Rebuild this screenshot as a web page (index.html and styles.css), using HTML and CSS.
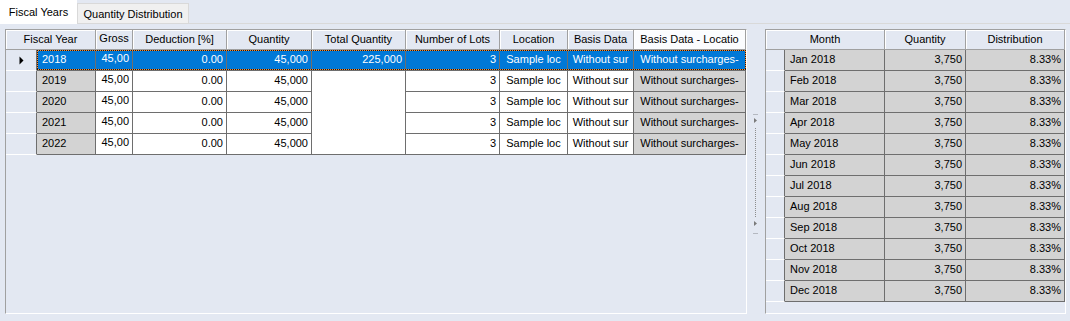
FILE: index.html
```html
<!DOCTYPE html>
<html>
<head>
<meta charset="utf-8">
<title>Fiscal Years</title>
<link rel="stylesheet" href="styles.css">
</head>
<body>
<div class="tabstrip">
  <div class="tab active">Fiscal Years</div>
  <div class="tab">Quantity Distribution</div>
  <div class="tab-fill"></div>
</div>
<div class="page">
  <div class="grid lgrid">
    <div class="table ltable">
      <div class="hd span2">Fiscal Year</div>
      <div class="hd up">Gross</div>
      <div class="hd">Deduction [%]</div>
      <div class="hd">Quantity</div>
      <div class="hd">Total Quantity</div>
      <div class="hd">Number of Lots</div>
      <div class="hd">Location</div>
      <div class="hd">Basis Data</div>
      <div class="hd hot">Basis Data - Locatio</div>

      <div class="rh cur"><svg width="5" height="9" viewBox="0 0 5 9"><polygon points="0.5,0.5 4.5,4.5 0.5,8.5" fill="#000"/></svg></div>
      <div class="c l sel">2018</div>
      <div class="c r sel up">45,00</div>
      <div class="c r sel">0.00</div>
      <div class="c r sel">45,000</div>
      <div class="c r sel">225,000</div>
      <div class="c r sel">3</div>
      <div class="c m sel">Sample loc</div>
      <div class="c m sel">Without sur</div>
      <div class="c m sel">Without surcharges-</div>

      <div class="rh"></div>
      <div class="c l g">2019</div>
      <div class="c r up">45,00</div>
      <div class="c r">0.00</div>
      <div class="c r">45,000</div>
      <div class="c merged"></div>
      <div class="c r">3</div>
      <div class="c m">Sample loc</div>
      <div class="c m">Without sur</div>
      <div class="c m g">Without surcharges-</div>

      <div class="rh"></div>
      <div class="c l g">2020</div>
      <div class="c r up">45,00</div>
      <div class="c r">0.00</div>
      <div class="c r">45,000</div>
      <div class="c r">3</div>
      <div class="c m">Sample loc</div>
      <div class="c m">Without sur</div>
      <div class="c m g">Without surcharges-</div>

      <div class="rh"></div>
      <div class="c l g">2021</div>
      <div class="c r up">45,00</div>
      <div class="c r">0.00</div>
      <div class="c r">45,000</div>
      <div class="c r">3</div>
      <div class="c m">Sample loc</div>
      <div class="c m">Without sur</div>
      <div class="c m g">Without surcharges-</div>

      <div class="rh"></div>
      <div class="c l g">2022</div>
      <div class="c r up">45,00</div>
      <div class="c r">0.00</div>
      <div class="c r">45,000</div>
      <div class="c r">3</div>
      <div class="c m">Sample loc</div>
      <div class="c m">Without sur</div>
      <div class="c m g">Without surcharges-</div>

      <div class="focus"></div>
    </div>
  </div>

  <div class="splitter">
    <svg width="18" height="285" viewBox="0 0 18 285">
      <line x1="6" y1="85.5" x2="11" y2="85.5" stroke="#b4b8c0"/>
      <polygon points="7,89 10,91.5 7,94" fill="#7a7a7a"/>
      <line x1="8.5" y1="99" x2="8.5" y2="188" stroke="#8c8c8c" stroke-dasharray="1 1"/>
      <polygon points="7,192 10,194.5 7,197" fill="#7a7a7a"/>
      <line x1="6" y1="204.5" x2="11" y2="204.5" stroke="#b4b8c0"/>
    </svg>
  </div>

  <div class="grid rgrid">
    <div class="table rtable">
      <div class="hd span2">Month</div>
      <div class="hd">Quantity</div>
      <div class="hd">Distribution</div>

      <div class="rh"></div><div class="c l g">Jan 2018</div><div class="c r g">3,750</div><div class="c r g">8.33%</div>
      <div class="rh"></div><div class="c l g">Feb 2018</div><div class="c r g">3,750</div><div class="c r g">8.33%</div>
      <div class="rh"></div><div class="c l g">Mar 2018</div><div class="c r g">3,750</div><div class="c r g">8.33%</div>
      <div class="rh"></div><div class="c l g">Apr 2018</div><div class="c r g">3,750</div><div class="c r g">8.33%</div>
      <div class="rh"></div><div class="c l g">May 2018</div><div class="c r g">3,750</div><div class="c r g">8.33%</div>
      <div class="rh"></div><div class="c l g">Jun 2018</div><div class="c r g">3,750</div><div class="c r g">8.33%</div>
      <div class="rh"></div><div class="c l g">Jul 2018</div><div class="c r g">3,750</div><div class="c r g">8.33%</div>
      <div class="rh"></div><div class="c l g">Aug 2018</div><div class="c r g">3,750</div><div class="c r g">8.33%</div>
      <div class="rh"></div><div class="c l g">Sep 2018</div><div class="c r g">3,750</div><div class="c r g">8.33%</div>
      <div class="rh"></div><div class="c l g">Oct 2018</div><div class="c r g">3,750</div><div class="c r g">8.33%</div>
      <div class="rh"></div><div class="c l g">Nov 2018</div><div class="c r g">3,750</div><div class="c r g">8.33%</div>
      <div class="rh"></div><div class="c l g">Dec 2018</div><div class="c r g">3,750</div><div class="c r g">8.33%</div>
    </div>
  </div>
</div>
</body>
</html>
```

FILE: styles.css
```css
html, body {
  margin: 0;
  padding: 0;
}
body {
  width: 1070px;
  height: 321px;
  overflow: hidden;
  background: #e3e8f2;
  font-family: "Liberation Sans", Arial, sans-serif;
  font-size: 11px;
  color: #000;
}

/* ---------- tabs ---------- */
.tabstrip {
  display: flex;
  align-items: flex-start;
  height: 24px;
}
.tab {
  box-sizing: border-box;
  text-align: center;
  line-height: 13px;
  white-space: nowrap;
}
.tab.active {
  width: 77px;
  height: 24px;
  padding-top: 6px;
  background: #ffffff;
}
.tab:not(.active) {
  width: 112px;
  height: 21px;
  margin-top: 3px;
  padding-top: 4px;
  background: #f0f0f0;
  border: 1px solid #d9d9d9;
}
.tab-fill {
  flex: 1;
  height: 24px;
  box-sizing: border-box;
  border-bottom: 1px solid #d9d9d9;
}

/* ---------- page ---------- */
.page {
  display: flex;
  padding: 5px 4px 0 5px;
}
.grid {
  box-sizing: border-box;
  height: 285px;
  border: 1px solid;
  border-color: #a0a0a0 #ffffff #ffffff #a0a0a0;
  background: #e3e8f2;
  overflow: hidden;
}
.lgrid { width: 742px; }
.rgrid { width: 301px; }
.splitter {
  width: 18px;
  height: 285px;
}
.splitter svg { display: block; }

.table {
  display: grid;
  grid-auto-rows: 21px;
  grid-template-rows: 20px;
  position: relative;
}
.ltable {
  grid-template-columns: 31px 59px 37px 94px 85px 94px 94px 68px 66px 112px;
}
.rtable {
  grid-template-columns: 19px 100px 81px 99px;
}

/* header cells */
.hd {
  box-sizing: border-box;
  height: 20px;
  line-height: 19px;
  text-align: center;
  white-space: nowrap;
  overflow: hidden;
  background: #e3e8f2;
  border-right: 1px solid #a0a0a0;
  border-bottom: 1px solid #a0a0a0;
  box-shadow: inset 1px 1px 0 #ffffff;
}
.hd.span2 { grid-column: span 2; }
.hd.up { line-height: 17px; }
.hd.hot { background: #fbfcfe; }

/* row headers */
.rh {
  box-sizing: border-box;
  background: #e3e8f2;
  border-right: 1px solid #6e6e6e;
  border-bottom: 1px solid #ffffff;
  display: flex;
  align-items: center;
  justify-content: center;
}
.rh svg { display: block; }

/* data cells */
.c {
  box-sizing: border-box;
  padding: 0 3px 2px;
  line-height: 18px;
  white-space: nowrap;
  overflow: hidden;
  background: #ffffff;
  border-right: 1px solid #6e6e6e;
  border-bottom: 1px solid #6e6e6e;
}
.c.l { padding-left: 5px; }
.c.r { text-align: right; }
.c.m { text-align: center; padding: 0 0 2px; }
.c.up { line-height: 16px; padding-bottom: 4px; }
.c.g { background: #d3d3d3; }
.c.sel {
  background: #0078d7;
  color: #ffffff;
}
.c.merged {
  grid-column: 6;
  grid-row: 3 / span 4;
}

/* focus rectangle of the current row */
.focus {
  position: absolute;
  left: 31px;
  top: 20px;
  width: 709px;
  height: 20px;
  pointer-events: none;
  background:
    repeating-linear-gradient(90deg, #1a1a1a 0 1px, #ff8a2a 1px 2px) left top / 100% 1px no-repeat,
    repeating-linear-gradient(90deg, #1a1a1a 0 1px, #ff8a2a 1px 2px) left bottom / 100% 1px no-repeat,
    repeating-linear-gradient(180deg, #1a1a1a 0 1px, #ff8a2a 1px 2px) left top / 1px 100% no-repeat,
    repeating-linear-gradient(180deg, #1a1a1a 0 1px, #ff8a2a 1px 2px) right top / 1px 100% no-repeat;
}
```
